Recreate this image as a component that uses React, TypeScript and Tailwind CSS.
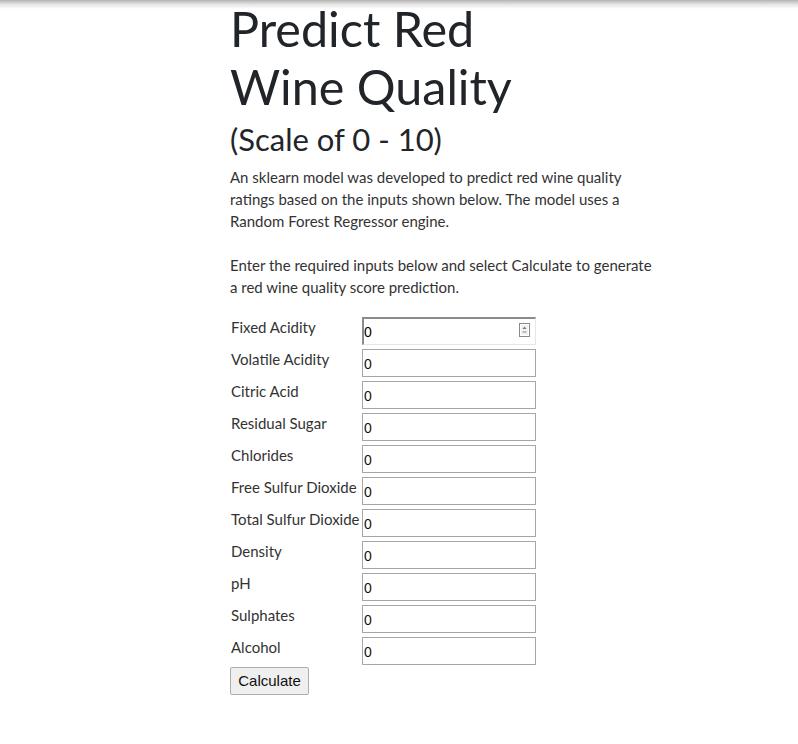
import React from 'react';

const fields = [
  'Fixed Acidity',
  'Volatile Acidity',
  'Citric Acid',
  'Residual Sugar',
  'Chlorides',
  'Free Sulfur Dioxide',
  'Total Sulfur Dioxide',
  'Density',
  'pH',
  'Sulphates',
  'Alcohol',
];

function SpinIcon() {
  return (
    <svg width="11" height="14" viewBox="0 0 11 14" className="absolute right-[6px] top-[6px]">
      <rect x="0.5" y="0.5" width="10" height="13" fill="#fff" stroke="#8a8a8a" />
      <rect x="2" y="2" width="7" height="10" fill="#f2f2f2" />
      <path d="M5.5 3.5 L7.5 6 L3.5 6 Z" fill="#777" />
      <path d="M3.5 8 L7.5 8 L7.5 10 L3.5 10 Z" fill="#bbb" />
    </svg>
  );
}

export default function App() {
  return (
    <div className="relative min-h-[744px] bg-white text-[#212529] font-['Lato',sans-serif]">
      <div className="pointer-events-none absolute left-0 right-0 top-0 h-[9px] bg-gradient-to-b from-[#b4b4b4] via-[#e6e6e6] to-transparent" />
      <div className="pl-[230px] pt-0">
        <h1 className="mt-0 mb-[6px] text-[48.5px] font-normal leading-[57.6px]">
          Predict Red
          <br />
          Wine Quality
        </h1>
        <h2 className="mb-[8px] text-[31px] font-normal leading-[1.2]">(Scale of 0 - 10)</h2>
        <p className="w-[428px] text-[15px] leading-[22px] text-[#333]">
          An sklearn model was developed to predict red wine quality ratings based on the inputs shown below. The
          model uses a Random Forest Regressor engine.
          <br />
          <br />
          Enter the required inputs below and select Calculate to generate a red wine quality score prediction.
        </p>
        <form className="mt-[18px]" onSubmit={(e) => e.preventDefault()}>
          <div className="grid grid-cols-[132px_174px] items-start gap-y-[3px]">
            {fields.map((f, i) => (
              <React.Fragment key={f}>
                <label className="whitespace-nowrap pl-[1px] text-[15px] leading-[22px] text-[#333]">{f}</label>
                {i === 0 ? (
                  <div className="relative mt-[1px] h-[28px]">
                    <input
                      type="text"
                      defaultValue="0"
                      className="h-[28px] w-[174px] border border-t-2 border-l-2 border-t-[#8c8c8c] border-l-[#8c8c8c] border-r-[#e6e6e6] border-b-[#e6e6e6] bg-white pl-[0px] pt-[1px] font-['Liberation_Sans',Arial,sans-serif] text-[14px] text-black outline-none"
                    />
                    <SpinIcon />
                  </div>
                ) : (
                  <input
                    type="text"
                    defaultValue="0"
                    className="mt-[1px] h-[28px] w-[174px] border border-[#a6a6a6] bg-white pl-[1px] pt-[2px] font-['Liberation_Sans',Arial,sans-serif] text-[14px] text-[#111] outline-none"
                  />
                )}
              </React.Fragment>
            ))}
          </div>
          <button
            type="submit"
            className="mt-[2px] h-[28px] w-[79px] rounded-[2px] border border-[#adadad] bg-[#efefef] font-['Liberation_Sans',Arial,sans-serif] text-[15px] text-[#111]"
          >
            Calculate
          </button>
        </form>
      </div>
    </div>
  );
}
